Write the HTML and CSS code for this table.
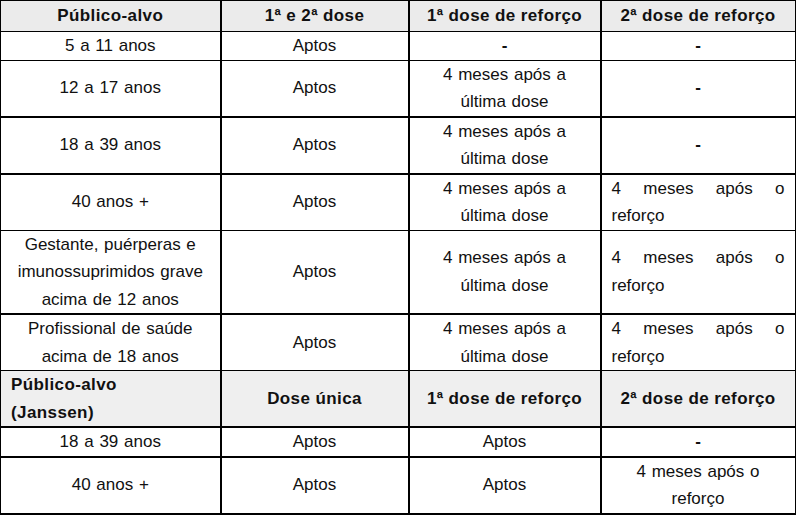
FILE: index.html
```html
<!DOCTYPE html>
<html lang="pt-BR">
<head>
<meta charset="utf-8">
<title>Vacinação</title>
<link rel="stylesheet" href="styles.css">
</head>
<body>
<table class="vac">
  <colgroup>
    <col class="c1"><col class="c2"><col class="c3"><col class="c4">
  </colgroup>
  <tr class="head">
    <th>Público-alvo</th><th>1ª e 2ª dose</th><th>1ª dose de reforço</th><th>2ª dose de reforço</th>
  </tr>
  <tr>
    <td>5 a 11 anos</td><td>Aptos</td><td class="dash">-</td><td class="dash">-</td>
  </tr>
  <tr class="thick">
    <td>12 a 17 anos</td><td>Aptos</td><td>4 meses após a última dose</td><td class="dash">-</td>
  </tr>
  <tr class="thick">
    <td>18 a 39 anos</td><td>Aptos</td><td>4 meses após a última dose</td><td class="dash">-</td>
  </tr>
  <tr>
    <td>40 anos +</td><td>Aptos</td><td>4 meses após a última dose</td><td class="just">4 meses após o reforço</td>
  </tr>
  <tr class="thick">
    <td>Gestante, puérperas e imunossuprimidos grave acima de 12 anos</td><td>Aptos</td><td>4 meses após a última dose</td><td class="just">4 meses após o reforço</td>
  </tr>
  <tr>
    <td>Profissional de saúde acima de 18 anos</td><td>Aptos</td><td>4 meses após a última dose</td><td class="just">4 meses após o reforço</td>
  </tr>
  <tr class="head2 thick">
    <th class="left">Público-alvo<br>(Janssen)</th><th>Dose única</th><th>1ª dose de reforço</th><th>2ª dose de reforço</th>
  </tr>
  <tr class="thick">
    <td>18 a 39 anos</td><td>Aptos</td><td>Aptos</td><td class="dash">-</td>
  </tr>
  <tr class="thick">
    <td>40 anos +</td><td>Aptos</td><td>Aptos</td><td>4 meses após o reforço</td>
  </tr>
</table>
</body>
</html>
```

FILE: styles.css
```css
html, body {
  margin: 0;
  padding: 0;
  background: #ffffff;
}

.vac {
  border-collapse: collapse;
  table-layout: fixed;
  width: 795px;
  font-family: "Liberation Sans", Arial, sans-serif;
  font-size: 17px;
  line-height: 27.5px;
  color: #111111;
  word-spacing: 1px;
}

.c1 { width: 220px; }
.c2 { width: 188px; }
.c3 { width: 192px; }
.c4 { width: 195px; }

.vac th,
.vac td {
  padding: 0 10px;
  text-align: center;
  vertical-align: middle;
  border-top: 1px solid #000;
  border-bottom: 1px solid #000;
  border-left: 2px solid #000;
  border-right: 2px solid #000;
}

.vac tr > :first-child {
  border-left: 1px solid #000;
}

.vac th {
  font-weight: bold;
  letter-spacing: 0.4px;
  word-spacing: 0;
}

.head th {
  background: #ebebeb;
  height: 30px;
}

.head2 th {
  background: #efefef;
}

.vac th.left {
  text-align: left;
}

.thick td,
.thick th {
  border-bottom: 2px solid #000;
}

.dash {
  font-weight: bold;
}

.vac td.just {
  text-align: justify;
  word-spacing: 0;
}
```
